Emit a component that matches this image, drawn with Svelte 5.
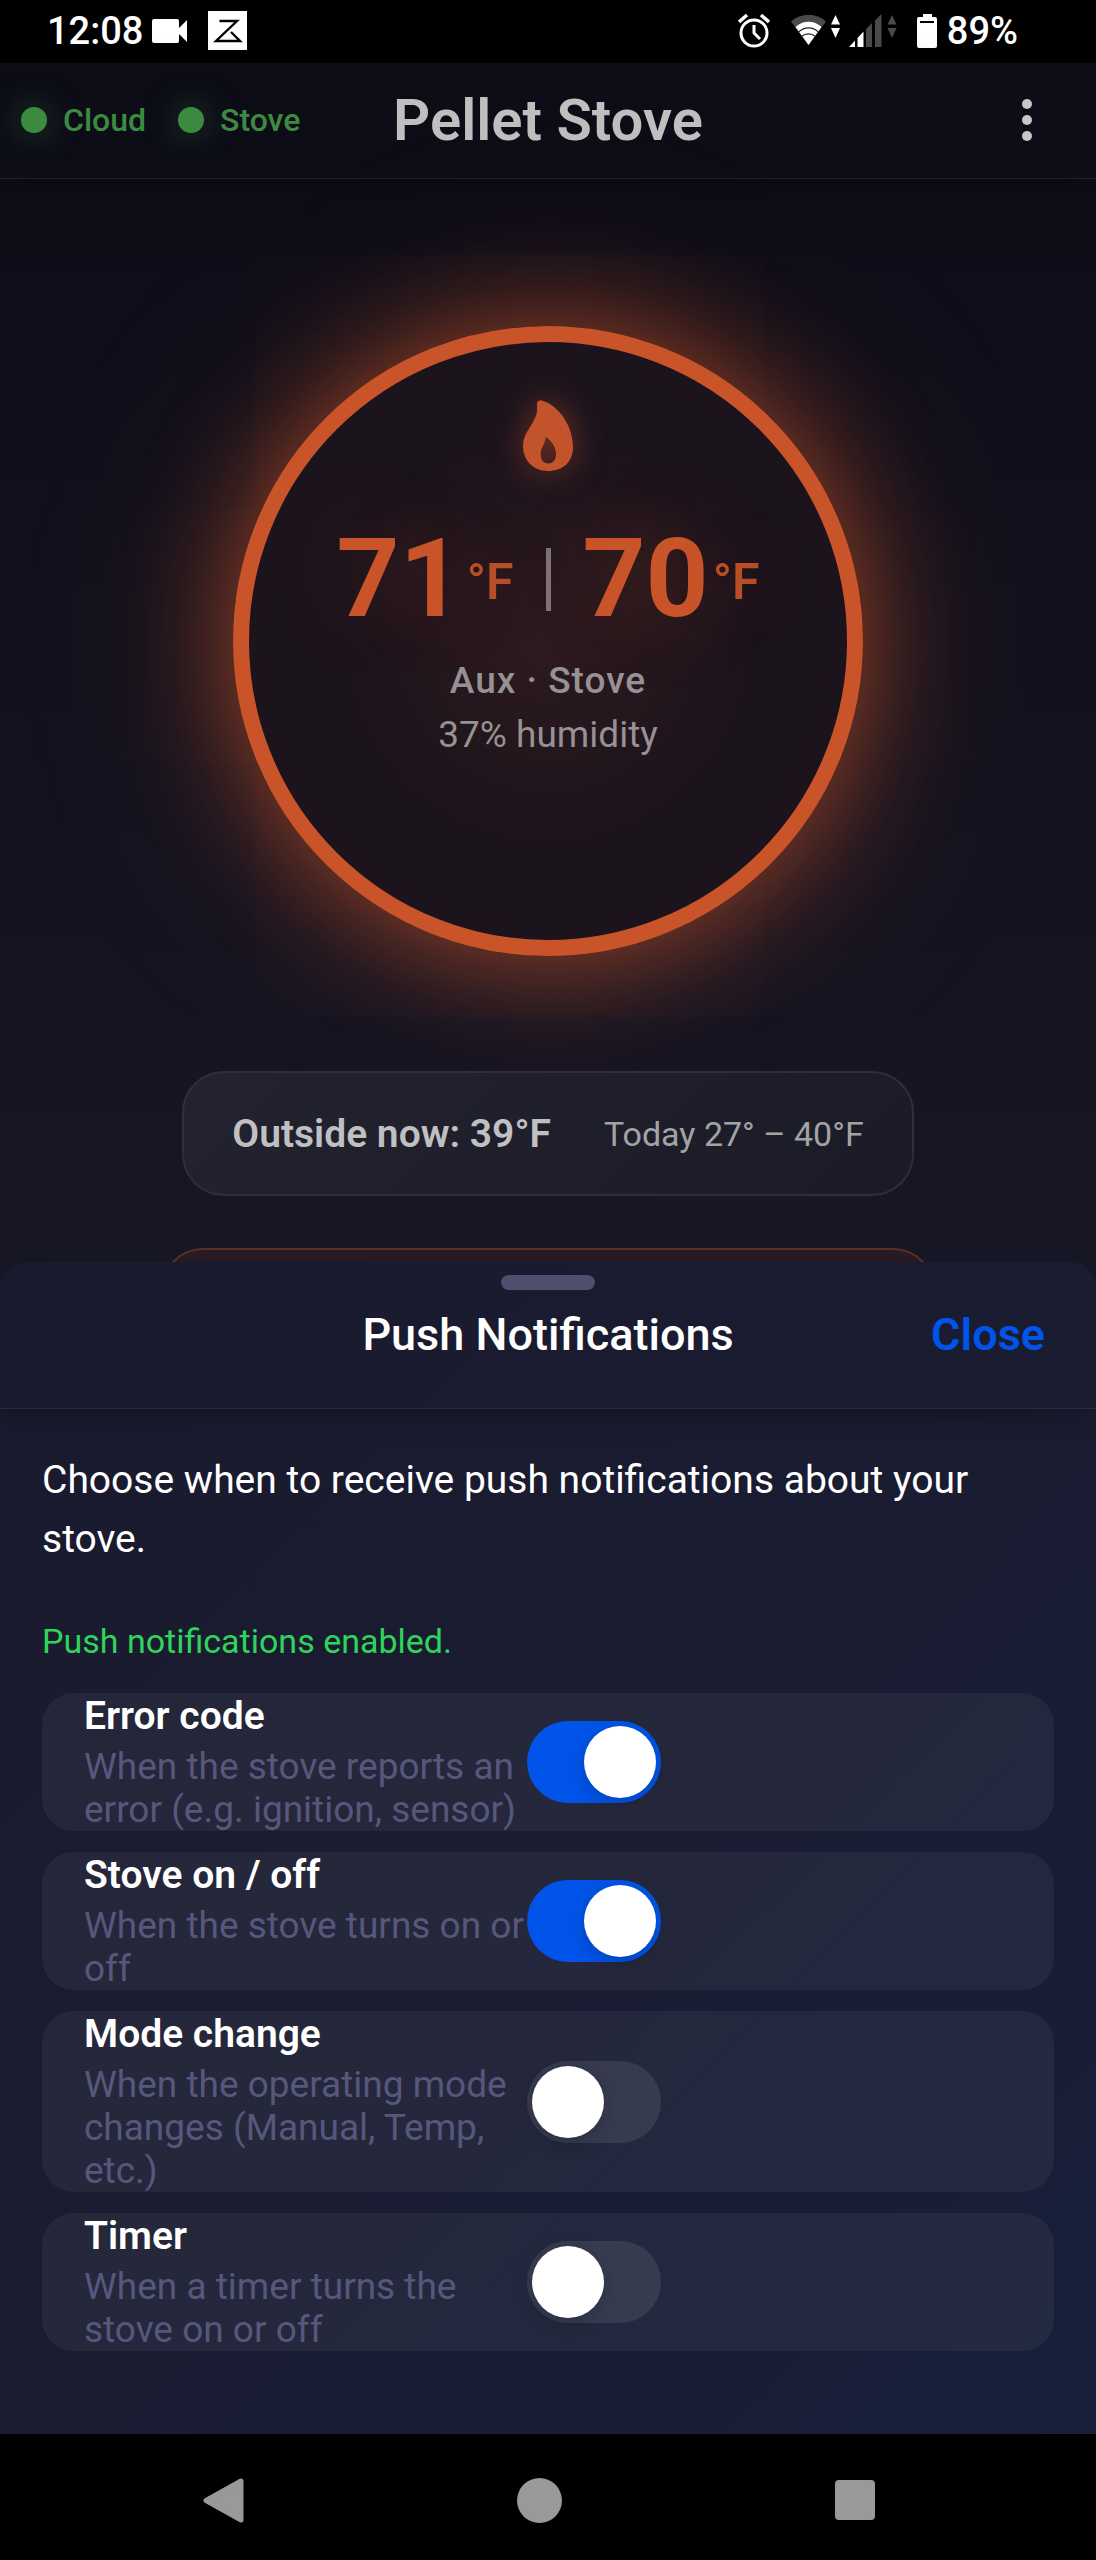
<!-- logic -->
<script>
  let alerts = $state([
    {
      id: "error",
      title: "Error code",
      text: "When the stove reports an error (e.g. ignition, sensor)",
      on: true,
    },
    {
      id: "power",
      title: "Stove on / off",
      text: "When the stove turns on or off",
      on: true,
    },
    {
      id: "mode",
      title: "Mode change",
      text: "When the operating mode changes (Manual, Temp, etc.)",
      on: false,
    },
    {
      id: "timer",
      title: "Timer",
      text: "When a timer turns the stove on or off",
      on: false,
    },
  ]);

  const temps = [71, 70];
  const links = ["Cloud", "Stove"];
</script>

<!-- structure -->
<div class="phone">
  <div class="status">
    <span>12:08</span>
    <svg class="camera" width="36" height="24" viewBox="0 0 36 24">
      <path d="M2 0h23a2 2 0 0 1 2 2v7l8-8v22l-8-8v7a2 2 0 0 1-2 2H2a2 2 0 0 1-2-2V2a2 2 0 0 1 2-2z" fill="#fff" />
    </svg>
    <svg class="app-badge" width="39" height="39" viewBox="0 0 39 39">
      <path d="M0 0h39v39H0z" fill="#fff" />
      <path d="M11.500 10H29L8 30h24L23 21" fill="none" stroke="#000" stroke-width="2.400" />
    </svg>
    <div class="system">
      <svg width="32" height="34" viewBox="0 0 32 34" fill="none" stroke="#fff">
        <circle cx="16" cy="19" r="13" stroke-width="3" />
        <path d="M16 11v8l6 6" stroke-width="3" />
        <path d="M1 8l8-7M31 8l-8-7" stroke-width="3.400" />
      </svg>
      <svg class="wifi" width="49" height="34" viewBox="0 0 49 34">
        <path d="M0 7.500C10-1.500 25-1.500 35 7.500L17.500 31z" fill="#4a4a4a" />
        <path d="M4.500 13C12 6 23 6 30.500 13L17.500 31z" fill="#fff" />
        <path d="M7.500 18C13.500 12.500 21.500 12.500 27.500 18M10.500 22.500C14.500 19 20.500 19 24.500 22.500" fill="none" stroke="#222" stroke-width="1.200" />
        <path d="M44.500 1l4.500 9.500h-9zM40 14h9l-4.500 10z" fill="#fff" />
      </svg>
      <svg class="signal" width="48" height="34" viewBox="0 0 48 34">
        <path d="M0 33l6-6.500V33zM8.500 24l6-6.500V33h-6z" fill="#fff" />
        <path d="M17 15l6-6v24h-6zM26 6.500l6.500-6.500v33H26zM43 1l4.500 9.500h-9zM38.500 14h9L43 24z" fill="#4a4a4a" />
      </svg>
      <svg class="battery" width="20" height="34" viewBox="0 0 20 34">
        <path d="M6 0h9v3h3a2 2 0 0 1 2 2v27a2 2 0 0 1-2 2H2a2 2 0 0 1-2-2V5a2 2 0 0 1 2-2h4z" fill="#fff" />
        <path d="M3 7h14v2H3z" fill="#000" />
      </svg>
      <span>89%</span>
    </div>
  </div>

  <div class="screen">
    <main class="dashboard">
      <header class="toolbar">
        <div class="links">
          {#each links as link}
            <span class="link"><i class="dot"></i>{link}</span>
          {/each}
        </div>
        <h1>Pellet Stove</h1>
        <button class="more" aria-label="More options">
          <svg width="10" height="42" viewBox="0 0 10 42" fill="#c8c8c8">
            <circle cx="5" cy="5" r="5" />
            <circle cx="5" cy="21" r="5" />
            <circle cx="5" cy="37" r="5" />
          </svg>
        </button>
      </header>

      <section class="dial">
        <svg class="flame" width="56" height="76" viewBox="520 398 56 76">
          <path
            fill="#c2532b"
            fill-rule="evenodd"
            d="M537 403.500C537 400.500 540 400 543 401C559 406 573 426 573 447C573 462 563 471 548 471C533 471 523 460 523 446C523 433 533 426 536.500 414C537.500 410 537 407 537 403.500zM545.500 437C546 443 540.700 447 540.700 454C540.700 460 543.500 463.500 548.300 463.500C553 463.500 556 460 556 454C556 447 551 440 545.500 437z"
          />
        </svg>
        <div class="temps">
          <span class="temp">{temps[0]}<small>°F</small></span>
          <i class="bar"></i>
          <span class="temp">{temps[1]}<small>°F</small></span>
        </div>
        <p class="source">Aux · Stove</p>
        <p class="humidity">37% humidity</p>
      </section>

      <section class="outside">
        <strong>Outside now: 39°F</strong>
        <span>Today 27° – 40°F</span>
      </section>

      <section class="panel"></section>
    </main>

    <div class="sheet" role="dialog" aria-labelledby="sheet-title">
      <div class="sheet-head">
        <i class="handle"></i>
        <div class="sheet-bar">
          <h2 id="sheet-title">Push Notifications</h2>
          <button class="close">Close</button>
        </div>
      </div>

      <div class="sheet-body">
        <p class="intro">Choose when to receive push notifications about your stove.</p>
        <p class="enabled">Push notifications enabled.</p>
        <div class="alerts">
          {#each alerts as alert (alert.id)}
            <div class="alert">
              <label for={alert.id}>
                <b>{alert.title}</b>
                <span>{alert.text}</span>
              </label>
              <input id={alert.id} type="checkbox" role="switch" bind:checked={alert.on} />
            </div>
          {/each}
        </div>
      </div>
    </div>
  </div>

  <nav class="system-nav">
    <button aria-label="Back">
      <svg width="45" height="45" viewBox="0 0 45 45">
        <path d="M40 3v39L5 22.500z" fill="#999" stroke="#999" stroke-width="5" stroke-linejoin="round" />
      </svg>
    </button>
    <button aria-label="Home">
      <svg width="45" height="45" viewBox="0 0 45 45">
        <circle cx="22.500" cy="22.500" r="22.500" fill="#999" />
      </svg>
    </button>
    <button aria-label="Recent apps">
      <svg width="45" height="45" viewBox="0 0 45 45">
        <rect x="2" y="2" width="40" height="40" rx="4" fill="#999" />
      </svg>
    </button>
  </nav>
</div>

<!-- look -->
<style>
  :global(body) {
    margin: 0;
    background: #000;
    font-family: Roboto, "Noto Sans", sans-serif;
  }

  h1,
  h2,
  p {
    margin: 0;
  }

  svg,
  i {
    display: block;
    flex: none;
  }

  button {
    padding: 0;
    border: 0;
    background: none;
    font: inherit;
    cursor: pointer;
  }

  .phone {
    display: flex;
    flex-direction: column;
    min-height: 100vh;
  }

  .status {
    display: flex;
    align-items: center;
    height: 63px;
    padding: 0 78px 2px 47px;
    box-sizing: border-box;
    color: #fff;
    font-size: 38px;
    font-weight: 500;
  }

  .camera {
    margin-left: 9px;
  }

  .app-badge {
    margin-left: 20px;
  }

  .system {
    display: flex;
    align-items: center;
    margin-left: auto;
  }

  .wifi {
    margin-left: 21px;
  }

  .signal {
    margin-left: 9px;
  }

  .battery {
    margin: 0 10px 0 20px;
  }

  /* dashboard and sheet share one cell, the sheet sits on top */
  .screen {
    flex: 1;
    display: grid;
    background: linear-gradient(#0c0c17, #11111d 22%, #161624 48%);
  }

  .dashboard,
  .sheet {
    grid-area: 1 / 1;
    min-width: 0;
  }

  .dashboard {
    display: flex;
    flex-direction: column;
    align-items: center;
  }

  .toolbar {
    display: grid;
    grid-template-columns: 1fr auto 1fr;
    align-items: center;
    align-self: stretch;
    height: 116px;
    padding: 0 21px 2px;
    box-sizing: border-box;
    border-bottom: 1px solid #22222c;
    box-shadow: 0 5px 26px rgba(0, 0, 0, 0.3);
  }

  .toolbar h1 {
    color: #bfbfc0;
    font-size: 58px;
    font-weight: 600;
  }

  .links {
    display: flex;
    gap: 32px;
  }

  .link {
    display: flex;
    align-items: center;
    gap: 16px;
    color: #3d8b40;
    font-size: 32px;
    font-weight: 500;
  }

  .dot {
    width: 26px;
    height: 26px;
    border-radius: 50%;
    background: #3d8b40;
    box-shadow: 0 0 32px rgba(61, 139, 64, 0.5);
  }

  .more {
    justify-self: end;
    padding: 0 43px;
  }

  .dial {
    display: flex;
    flex-direction: column;
    align-items: center;
    width: 630px;
    height: 630px;
    margin-top: 147px;
    padding-top: 56px;
    box-sizing: border-box;
    border: 16px solid #c95429;
    border-radius: 50%;
    background: radial-gradient(circle, #2d1a1e, #1b131c 50%, #1d141e);
    box-shadow:
      0 0 105px rgba(201, 84, 41, 0.65),
      0 0 210px rgba(201, 84, 41, 0.3);
  }

  .flame {
    overflow: visible;
    filter: drop-shadow(0 0 16px rgba(201, 84, 41, 0.5));
  }

  .temps {
    display: flex;
    align-items: center;
    gap: 32px;
    margin-top: 50px;
  }

  .temp {
    display: flex;
    align-items: center;
    gap: 4px;
    color: #c95429;
    font-size: 110px;
    font-weight: 700;
    line-height: 110px;
    text-shadow: 0 0 80px rgba(201, 84, 41, 0.3);
  }

  .temp small {
    padding-top: 6px;
    color: #b84e28;
    font-size: 50px;
    font-weight: 600;
    line-height: 60px;
  }

  .bar {
    width: 5px;
    height: 63px;
    background: #7e7375;
  }

  .source,
  .humidity {
    color: #989193;
    font-size: 37px;
    line-height: 54px;
  }

  .source {
    margin-top: 20px;
    font-weight: 500;
    letter-spacing: 1px;
  }

  .outside {
    display: flex;
    align-items: center;
    gap: 53px;
    height: 125px;
    margin-top: 115px;
    padding: 0 48px;
    box-sizing: border-box;
    border: 2px solid #2f2e3a;
    border-radius: 42px;
    background: linear-gradient(135deg, #23222f, #1b1a27);
    color: #a3a3a6;
    font-size: 34px;
  }

  .outside strong {
    color: #c0c0c2;
    font-size: 39px;
    font-weight: 600;
  }

  .panel {
    width: 774px;
    max-width: 90%;
    height: 160px;
    margin-top: 52px;
    box-sizing: border-box;
    border: 2px solid #5b2f27;
    border-radius: 42px;
    background: #271a23;
  }

  .sheet {
    align-self: end;
    border-radius: 26px 26px 0 0;
    background: linear-gradient(135deg, #1a1a2e, #1a1c31 50%, #171f39);
    color: #fff;
  }

  .sheet-head {
    display: flex;
    flex-direction: column;
    align-items: center;
    height: 147px;
    padding-top: 13px;
    box-sizing: border-box;
    border-bottom: 1px solid #2b2c3d;
    box-shadow: 0 5px 26px rgba(0, 0, 0, 0.3);
    clip-path: inset(0 0 -40px);
  }

  .handle {
    width: 94px;
    height: 15px;
    border-radius: 8px;
    background: #4f4f6e;
  }

  .sheet-bar {
    display: grid;
    grid-template-columns: 1fr auto 1fr;
    align-items: center;
    align-self: stretch;
    margin-top: 18px;
    padding: 0 51px;
  }

  .sheet-bar h2 {
    grid-column: 2;
    font-size: 45px;
    font-weight: 500;
    line-height: 54px;
  }

  .close {
    justify-self: end;
    color: #0054e9;
    font-size: 45px;
    font-weight: 600;
    line-height: 54px;
  }

  .sheet-body {
    padding: 42px 42px 83px;
  }

  .intro {
    font-size: 39px;
    line-height: 59px;
  }

  .enabled {
    margin: 52px 0 32px;
    color: #2dd55b;
    font-size: 34px;
    line-height: 40px;
  }

  .alerts {
    display: flex;
    flex-direction: column;
    gap: 21px;
  }

  .alert {
    display: flex;
    align-items: center;
    padding: 0 42px;
    border-radius: 32px;
    background: rgba(255, 255, 255, 0.05);
  }

  .alert label {
    width: 443px;
  }

  .alert b {
    display: block;
    margin-bottom: 6px;
    font-size: 39px;
    font-weight: 600;
    line-height: 46px;
  }

  .alert span {
    display: block;
    color: #57577d;
    font-size: 37px;
    line-height: 43px;
  }

  .alert input {
    flex: none;
    display: flex;
    width: 134px;
    height: 82px;
    margin: 0;
    padding: 5px;
    box-sizing: border-box;
    appearance: none;
    border-radius: 41px;
    background: rgba(255, 255, 255, 0.09);
    cursor: pointer;
  }

  .alert input::before {
    content: "";
    width: 72px;
    height: 72px;
    border-radius: 50%;
    background: #fff;
    box-shadow: 0 5px 18px rgba(0, 0, 0, 0.2);
  }

  .alert input:checked {
    justify-content: flex-end;
    background: #0054e9;
  }

  .system-nav {
    display: flex;
    align-items: center;
    justify-content: center;
    gap: 271px;
    height: 126px;
    padding: 6px 18px 0 0;
    box-sizing: border-box;
  }
</style>
